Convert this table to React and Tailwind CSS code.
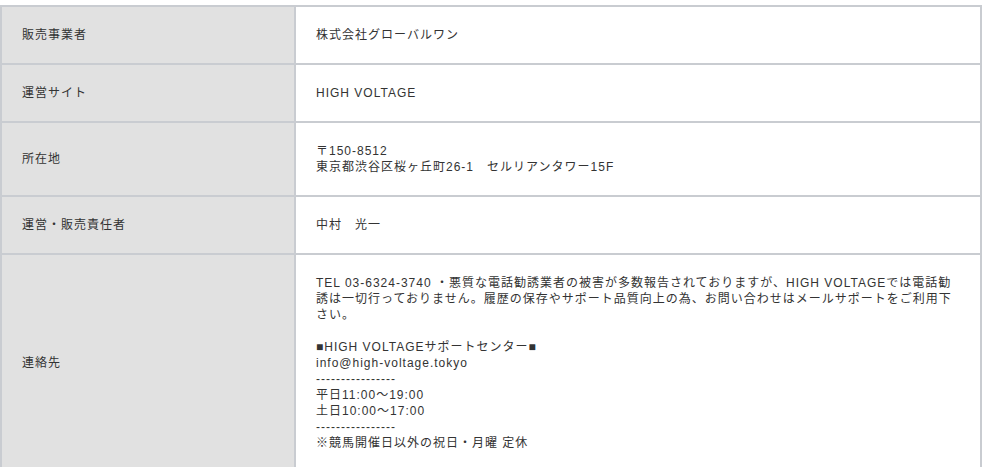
const rows = [
  { label: '販売事業者', value: ['株式会社グローバルワン'] },
  { label: '運営サイト', value: ['HIGH VOLTAGE'] },
  { label: '所在地', value: ['〒150-8512', '東京都渋谷区桜ヶ丘町26-1　セルリアンタワー15F'] },
  { label: '運営・販売責任者', value: ['中村　光一'] },
  {
    label: '連絡先',
    value: [
      'TEL 03-6324-3740 ・悪質な電話勧誘業者の被害が多数報告されておりますが、HIGH VOLTAGEでは電話勧',
      '誘は一切行っておりません。履歴の保存やサポート品質向上の為、お問い合わせはメールサポートをご利用下',
      'さい。',
      '\u00a0',
      '■HIGH VOLTAGEサポートセンター■',
      'info@high-voltage.tokyo',
      '----------------',
      '平日11:00～19:00',
      '土日10:00～17:00',
      '----------------',
      '※競馬開催日以外の祝日・月曜 定休',
    ],
  },
];

const App = () => {
  return (
    <div className="min-h-screen bg-white pt-[5px] text-[12px] leading-4 text-[#333] tracking-[1px]" style={{ fontFamily: '"Liberation Sans", "Noto Sans CJK JP", sans-serif' }}>
      <div className="w-[982px] border-2 border-[#c9ccd1]">
        {rows.map((row, i) => (
          <div key={i} className={`flex ${i < rows.length - 1 ? 'border-b-2 border-[#c9ccd1]' : ''}`}>
            <div className="w-[294px] shrink-0 bg-[#e1e1e1] border-r-2 border-[#c9ccd1] px-5 py-5 flex items-center">
              {row.label}
            </div>
            <div className="flex-1 px-5 py-5 whitespace-nowrap">
              {row.value.map((line, j) => (
                <div key={j}>{line}</div>
              ))}
            </div>
          </div>
        ))}
      </div>
    </div>
  );
};

export default App;
